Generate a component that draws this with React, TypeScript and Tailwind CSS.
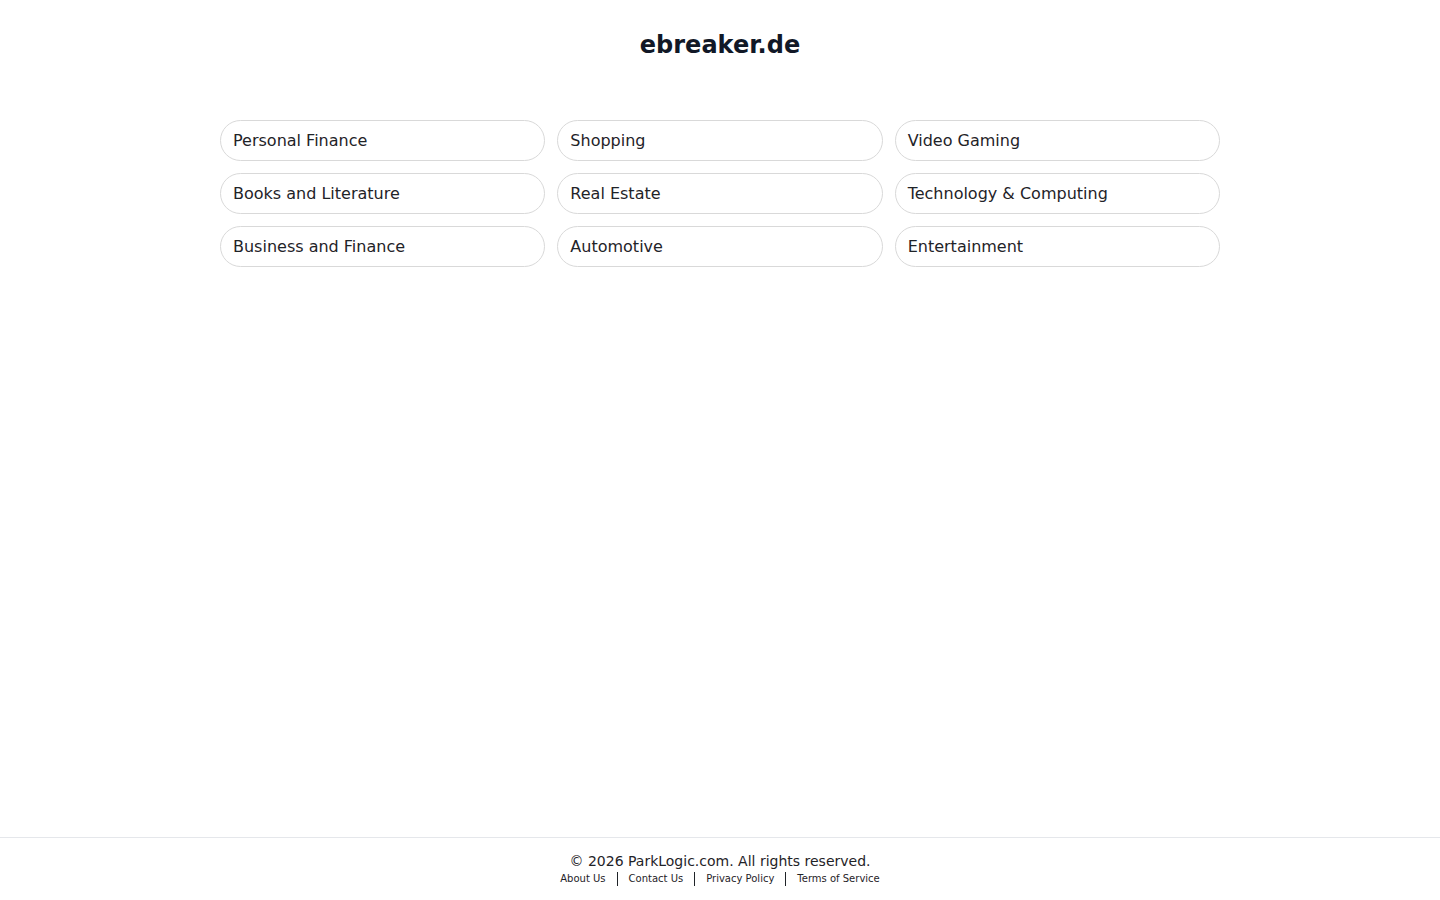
import React from 'react';

const topics = [
  'Personal Finance',
  'Shopping',
  'Video Gaming',
  'Books and Literature',
  'Real Estate',
  'Technology & Computing',
  'Business and Finance',
  'Automotive',
  'Entertainment',
];

const links = ['About Us', 'Contact Us', 'Privacy Policy', 'Terms of Service'];

export default function App() {
  return (
    <div className="min-h-screen flex flex-col bg-white text-gray-900 font-['DejaVu_Sans',sans-serif]">
      <main className="flex-1 pt-[29px]">
        <h1 className="text-center text-2xl font-bold leading-8 text-[#111827]">ebreaker.de</h1>

        <div className="mx-auto mt-[59px] grid w-[1000px] grid-cols-3 gap-3">
          {topics.map((t) => (
            <a
              key={t}
              href="#"
              className="flex h-[41px] items-center rounded-full border border-[#d9d9d9] px-3 text-base text-[#1f2328]"
            >
              {t}
            </a>
          ))}
        </div>
      </main>

      <footer className="border-t border-[#e5e7eb] pt-[13px] pb-[13px] text-center">
        <p className="text-sm leading-5 text-[#1f2328]">© 2026 ParkLogic.com. All rights reserved.</p>
        <div className="flex items-center justify-center leading-4">
          {links.map((l, i) => (
            <React.Fragment key={l}>
              {i > 0 && <span className="mx-[11px] h-[14px] border-l border-[#1f2328]" />}
              <a href="#" className="text-[10px] text-[#1f2328]">
                {l}
              </a>
            </React.Fragment>
          ))}
        </div>
      </footer>
    </div>
  );
}
